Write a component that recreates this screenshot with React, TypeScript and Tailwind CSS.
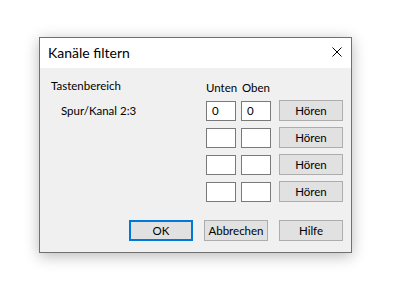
import React from "react";

function Btn({ label, primary }: { label: string; primary?: boolean }) {
  return (
    <div
      className={
        primary
          ? "w-[64px] h-[21px] bg-[#e1e1e1] border-2 border-[#0078d7] flex items-center justify-center text-black"
          : "w-[64px] h-[21px] bg-[#e1e1e1] border border-[#adadad] flex items-center justify-center text-black"
      }
    >
      {label}
    </div>
  );
}

function Field({ value }: { value?: string }) {
  return (
    <div className="mt-[1px] w-[30px] h-[20px] bg-white border border-[#7a7a7a] flex items-center pl-[5px] text-black">
      {value}
    </div>
  );
}

function Row({ label, value }: { label?: string; value?: string }) {
  return (
    <div className="flex items-start h-[21px]">
      <div className="flex-1 h-[21px] flex items-center pl-[10px]">{label}</div>
      <Field value={value} />
      <div className="w-[5px]" />
      <Field value={value} />
      <div className="w-[8px]" />
      <Btn label="Hören" />
    </div>
  );
}

export default function App() {
  return (
    <div
      className="w-[393px] h-[287px] bg-white pt-[37px] pl-[39px]"
      style={{ fontFamily: "Lato, 'Liberation Sans', sans-serif" }}
    >
      <div className="w-[313px] h-[216px] border border-[#707070] bg-[#f0f0f0] flex flex-col shadow-[0_3px_14px_rgba(0,0,0,0.28)] text-[11.5px] leading-[14px] text-black">
        <div className="h-[30px] bg-white flex items-center justify-between pl-[8px] pr-[9px]">
          <span className="text-[14px] leading-[18px]">Kanäle filtern</span>
          <svg width="10" height="10" viewBox="0 0 10 10" className="mb-[2px]">
            <path d="M0.5 0.5 L9.5 9.5 M9.5 0.5 L0.5 9.5" stroke="#000" strokeWidth="1" fill="none" />
          </svg>
        </div>
        <div className="flex-1 flex flex-col pl-[11px] pr-[8px] pt-[11px] pb-[11px]">
          <div className="h-[16px] flex items-start">
            <div className="flex-1">Tastenbereich</div>
            <div className="w-[35px] pt-[2px]">Unten</div>
            <div className="w-[102px] pt-[2px] pl-[1px]">Oben</div>
          </div>
          <div className="mt-[5px] flex flex-col gap-[6px]">
            <Row label="Spur/Kanal 2:3" value="0" />
            <Row />
            <Row />
            <Row />
          </div>
          <div className="mt-[18px] flex justify-end gap-[11px]">
            <Btn label="OK" primary />
            <Btn label="Abbrechen" />
            <Btn label="Hilfe" />
          </div>
        </div>
      </div>
    </div>
  );
}
